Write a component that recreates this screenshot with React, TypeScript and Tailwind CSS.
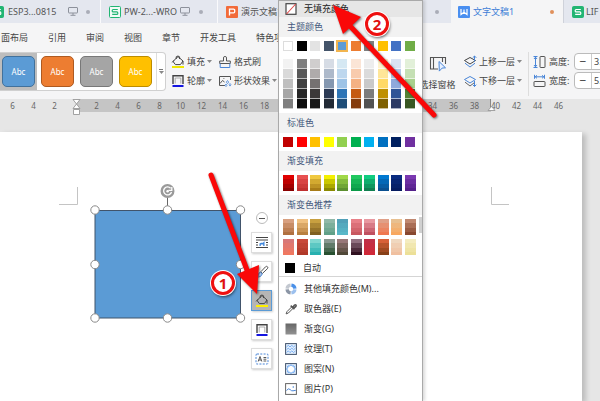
import React from 'react';

const themeColors = [
  { base: '#ffffff', shades: ['#f2f2f2', '#d9d9d9', '#bfbfbf', '#a6a6a6', '#7f7f7f'] },
  { base: '#000000', shades: ['#7f7f7f', '#595959', '#3f3f3f', '#262626', '#0d0d0d'] },
  { base: '#e3e3e3', shades: ['#d0cece', '#afabab', '#757171', '#3b3838', '#171717'] },
  { base: '#44546a', shades: ['#d6dce5', '#adb9ca', '#8497b0', '#2b3a55', '#222a35'] },
  { base: '#5b9bd5', shades: ['#d5e8f3', '#bdd7ee', '#9dc3e6', '#2e75b6', '#1f4e79'] },
  { base: '#ed7d31', shades: ['#fbe5d6', '#f8cbad', '#f4b183', '#c55a11', '#843c0c'] },
  { base: '#7f7f7f', shades: ['#ededed', '#dbdbdb', '#c9c9c9', '#7c7c7c', '#525252'] },
  { base: '#ffc000', shades: ['#fff2cc', '#ffe699', '#ffd966', '#bf9000', '#7f6000'] },
  { base: '#4472c4', shades: ['#dae3f3', '#b4c7e7', '#8faadc', '#2f5597', '#2c3a64'] },
  { base: '#70ad47', shades: ['#e2f0d9', '#c5e0b4', '#a9d18e', '#548235', '#385723'] },
];

const standardColors = [
  '#c00000', '#ff0000', '#ffc000', '#ffff00', '#92d050',
  '#00b050', '#00b0f0', '#0070c0', '#002060', '#7030a0',
];

const gradientFills = [
  ['#e00000', '#8a0000'], ['#e85050', '#c03030'], ['#f0c840', '#a87c18'], ['#f4f000', '#8c8a00'],
  ['#a0d848', '#5c9030'], ['#20c860', '#0a9a48'], ['#10cc80', '#108050'], ['#0078d0', '#0a5090'],
  ['#0a2c80', '#061c60'], ['#7a38b0', '#54208a'],
];

const suggestedRows = [
  [
    ['#d8a080', '#b07040'], ['#f0c080', '#b88040'], ['#c8a040', '#806020'], ['#90b8a8', '#60a088'],
    ['#50a0b8', '#58b8c8'], ['#e88088', '#c85860'], ['#e898a0', '#c05060'], ['#e0a088', '#f07850'],
    ['#e8c090', '#f8a860'], ['#c08870', '#884830'],
  ],
  [
    ['#d87878', '#f07860'], ['#c84838', '#b03828'], ['#80d8d0', '#28b0b0'], ['#889890', '#285030'],
    ['#987878', '#504838'], ['#907080', '#301020'], ['#c03048', '#d02838'], ['#d86038', '#884018'],
    ['#f0d8c0', '#f0c0a0'], ['#f4ecc0', '#ece098'],
  ],
];

const presets = [
  { name: 'blue', style: 'bg-[#5b9bd5] border-[#41719c]', selected: true },
  { name: 'orange', style: 'bg-[#ed7d31] border-[#ae5a21]', selected: false },
  { name: 'gray', style: 'bg-[#a5a5a5] border-[#787878]', selected: false },
  { name: 'yellow', style: 'bg-[#ffc000] border-[#bc8c00]', selected: false },
];

const ribbonTabs = ['面布局', '引用', '审阅', '视图', '章节', '开发工具', '特色项'];

const Caret = () => (
  <svg viewBox="0 0 5 3" className="h-[3px] w-[5px] shrink-0">
    <path d="M0 0h5L2.5 3z" fill="#888" />
  </svg>
);

const Monitor = () => (
  <svg viewBox="0 0 10 9" className="h-[9px] w-[10px] shrink-0" fill="none" stroke="#8d919b">
    <rect x="0.5" y="0.5" width="9" height="5.5" rx="0.5" />
    <path d="M5 6v2M2.5 8.3h5" />
  </svg>
);

const SheetLogo = ({ outlined = false }: { outlined?: boolean }) => (
  <svg viewBox="0 0 12 12" className="size-3 shrink-0" fill="none">
    <rect x="0.5" y="0.5" width="11" height="11" rx="1" fill={outlined ? '#f3fbf7' : '#22b573'} stroke="#22b573" />
    <path d="M8.8 3.5H4.2a1 1 0 0 0-1 1v.4a1 1 0 0 0 1 1h3.6a1 1 0 0 1 1 1v.5a1 1 0 0 1-1 1H3.2" stroke={outlined ? '#22b573' : '#fff'} strokeWidth="1.2" />
  </svg>
);

const SlideLogo = () => (
  <svg viewBox="0 0 12 12" className="size-3 shrink-0" fill="none">
    <rect width="12" height="12" rx="1" fill="#f26b3a" />
    <path d="M3.5 9.5V3.2h4.2a1 1 0 0 1 1 1v1.6a1 1 0 0 1-1 1H3.5" stroke="#fff" strokeWidth="1.3" />
  </svg>
);

const WriterLogo = () => (
  <svg viewBox="0 0 12 12" className="size-3 shrink-0" fill="none">
    <rect width="12" height="12" rx="1" fill="#4a8ff0" />
    <path d="M3 3v5.5l3-2.3 3 2.3V3M6 3.5v3" stroke="#fff" strokeWidth="1.2" />
  </svg>
);

const BucketIcon = ({ yellow = '#f0e800' }: { yellow?: string }) => (
  <svg viewBox="0 0 14 14" className="size-3.5 shrink-0" fill="none" stroke="#444" strokeWidth="1">
    <path d="M7 1.6 12 6 9.4 9.6H4.4L2 6.4z" />
    <path d="M5.2 4V1.8q1.8-1.6 3.4 0V4M12 6v3.6M1.2 7.4 3 5.4" />
    <rect x="1" y="11" width="12" height="2" fill={yellow} stroke="none" />
  </svg>
);

const OutlineIcon = () => (
  <svg viewBox="0 0 14 14" className="size-3.5 shrink-0" fill="none">
    <path d="M2 10V1.7h10V10" stroke="#444" strokeWidth="1.4" />
    <path d="M4.2 9.5V4h5.6v5.5" stroke="#999" strokeWidth="0.8" />
    <rect x="1.5" y="11" width="11" height="2" fill="#1414e0" />
  </svg>
);

const FormatBrushIcon = () => (
  <svg viewBox="0 0 14 14" className="size-3.5 shrink-0" fill="none" strokeWidth="1">
    <path d="M5.5 6V2.2q1.5-1.6 3 0V6" stroke="#555" />
    <path d="M5.5 6H1.7v2.5h10.6V6H8.5" stroke="#555" />
    <path d="M2.2 8.5v4h9.6v-4" stroke="#4a86d8" />
  </svg>
);

const ShapeEffectIcon = () => (
  <svg viewBox="0 0 14 14" className="size-3.5 shrink-0" fill="none">
    <path d="M7 11.5H1.5v-9h11V6" stroke="#555" />
    <path d="m2 9.5 2.5-3 2 1.5" stroke="#555" />
    <path d="M5.5 4.5h.8" stroke="#555" />
    <path d="m9.5 6.5 1.2 1.6L9.5 9.7 8.3 8.1zM8 10l1 1.3L8 12.6l-1-1.3zM12 9.5l1 1.3-1 1.3-1-1.3z" stroke="#4a86d8" strokeWidth="0.8" />
  </svg>
);

const SelectPaneIcon = () => (
  <svg viewBox="0 0 18 17" className="h-[17px] w-[18px]" fill="none">
    <path d="M9 13H1.5V1.5h15V8M4.5 1.5V13M13.5 1.5V6" stroke="#555" strokeWidth="1.1" />
    <path d="m10 5.5 6.5 6.3-3.4.3-2.8 3z" fill="#e6f0ff" stroke="#4a86d8" />
  </svg>
);

const LayerIcon = ({ down = false }: { down?: boolean }) => (
  <svg viewBox="0 0 14 14" className="size-3.5 shrink-0" fill="none">
    <path d="m7 2.5 5.5 3L7 9 1.5 5.5z" stroke={down ? '#4a86d8' : '#444'} />
    <path d="M2 8.2 7 12l5-3.8" stroke={down ? '#666' : '#4a86d8'} />
    {down ? (
      <path d="M11.5 7v5.5m-1.8-1.8 1.8 1.8 1.8-1.8" stroke="#4a86d8" />
    ) : (
      <path d="M11.5 6.5V1M9.7 2.8 11.5 1l1.8 1.8" stroke="#4a86d8" />
    )}
  </svg>
);

const HeightIcon = () => (
  <svg viewBox="0 0 13 14" className="h-3.5 w-[13px] shrink-0" fill="none">
    <path d="M.5 1.5h4M.5 12.5h4M2.5 2v10M1 4l1.5-1.8L4 4M1 10l1.5 1.8L4 10" stroke="#4a86d8" />
    <rect x="7" y="1.5" width="5" height="11" rx="0.5" stroke="#555" />
  </svg>
);

const WidthIcon = () => (
  <svg viewBox="0 0 13 14" className="h-3.5 w-[13px] shrink-0" fill="none">
    <path d="M1.5.8v4M11.5.8v4M2 2.8h9M4 1.3 2.2 2.8 4 4.3M9 1.3l1.8 1.5L9 4.3" stroke="#4a86d8" />
    <rect x="1" y="7.5" width="11" height="5" rx="0.5" stroke="#555" />
  </svg>
);

const WrapIcon = () => (
  <svg viewBox="0 0 14 14" className="size-3.5" fill="none">
    <path d="M1 1.5h12M1 4h12M1 6.5h2M11 6.5h2M1 9h2M11 9h2M1 11.5h12" stroke="#444" />
    <path d="M4.5 10V7.5L6 6.8h2L9.5 5v5H8.2V8.5H5.8V10z" fill="#3f86dc" />
  </svg>
);

const PenIcon = () => (
  <svg viewBox="0 0 14 14" className="size-3.5" fill="none">
    <path d="M12.5 1.8q-1-1-2 0L5.8 6.8l1.6 1.7 5-4.8q.9-1 .1-1.9z" stroke="#555" />
    <path d="M5.6 7.2q-2 .4-2.2 2.3-.3 1.8-2 2.3 4.4 1 5.8-2.8z" fill="#bcd6f8" stroke="#4a86d8" />
  </svg>
);

const TextFrameIcon = () => (
  <svg viewBox="0 0 14 14" className="size-3.5" fill="none">
    <rect x="1" y="2" width="12" height="10" rx="1" stroke="#4a86d8" strokeDasharray="2 1.3" />
    <path d="M3.2 9.5 5 4.5l1.8 5M3.8 8h2.4M8.5 5.5h2.8M8.5 7.2h2.8M8.5 9h2.8" stroke="#444" strokeWidth="0.9" />
  </svg>
);

const NoFillIcon = () => (
  <svg viewBox="0 0 12 12" className="size-3 shrink-0" fill="none">
    <rect x="1" y="0.7" width="10" height="10.6" fill="#fff" stroke="#444" strokeWidth="1.2" />
    <path d="M1.5 11 10.7 1" stroke="#e04848" strokeWidth="1.1" />
  </svg>
);

const WheelIcon = () => (
  <svg viewBox="0 0 12 12" className="size-3 shrink-0" fill="none" strokeWidth="3.4">
    <path d="M6.4 2.1A4 4 0 0 1 9.9 5.6" stroke="#4a90e8" />
    <path d="M9.9 6.4a4 4 0 0 1-3.5 3.5" stroke="#9cc0ee" />
    <path d="M5.6 9.9a4 4 0 0 1-3.5-3.5" stroke="#8b95a5" />
    <path d="M2.1 5.6a4 4 0 0 1 3.5-3.5" stroke="#c3c8d0" />
  </svg>
);

const DropperIcon = () => (
  <svg viewBox="0 0 12 12" className="size-3 shrink-0" fill="none">
    <path d="M7 3.6 2 8.6l-.9 2.3 2.3-.9 5-5" stroke="#555" />
    <path d="m5.7 2.6 3.7 3.7M7.5 4.5l2-2.4q.9-.6 1.4 0t0 1.3L8.6 5.4z" stroke="#555" strokeWidth="1.5" />
  </svg>
);

const GradientIcon = () => (
  <svg viewBox="0 0 12 12" className="size-3 shrink-0">
    <defs>
      <linearGradient id="grayFade" x1="0" y1="0" x2="0" y2="1">
        <stop offset="0" stopColor="#666" />
        <stop offset="1" stopColor="#929292" />
      </linearGradient>
    </defs>
    <rect x="0.5" y="0.5" width="11" height="11" fill="url(#grayFade)" />
  </svg>
);

const TextureIcon = () => (
  <svg viewBox="0 0 12 12" className="size-3 shrink-0" fill="none">
    <rect x="0.6" y="0.6" width="10.8" height="10.8" fill="#e3effd" stroke="#41516b" />
    <path d="m1.5 4 1.8-1.7L5 4l1.8-1.7L8.6 4l1.8-1.7M1.5 6.8l1.8-1.7L5 6.8l1.8-1.7 1.8 1.7 1.8-1.7M1.5 9.6l1.8-1.7L5 9.6l1.8-1.7 1.8 1.7 1.8-1.7" stroke="#5b9cee" strokeWidth="0.8" />
  </svg>
);

const PatternIcon = () => (
  <svg viewBox="0 0 12 12" className="size-3 shrink-0" fill="none">
    <rect x="0.6" y="0.6" width="10.8" height="10.8" fill="#e3effd" stroke="#41516b" />
    <path d="m6 1.8 1.4 1.1 1.8.1.1 1.7L10.4 6 9.3 7.4l-.1 1.8-1.8.1L6 10.4 4.6 9.3l-1.8-.1-.1-1.8L1.6 6l1.1-1.3.1-1.7 1.8-.1z" fill="#fff" stroke="#5b9cee" />
  </svg>
);

const PictureIcon = () => (
  <svg viewBox="0 0 12 12" className="size-3 shrink-0" fill="none">
    <rect x="0.6" y="0.6" width="10.8" height="10.8" fill="#fff" stroke="#666" />
    <path d="M1.5 7.5q2-2.8 3.6-1T8 7.8l2.8-.5" stroke="#4a86d8" />
    <circle cx="8.3" cy="4" r="0.8" fill="#4a86d8" />
  </svg>
);

const menuActions = [
  { label: '其他填充颜色(M)...', icon: <WheelIcon /> },
  { label: '取色器(E)', icon: <DropperIcon /> },
  { label: '渐变(G)', icon: <GradientIcon /> },
  { label: '纹理(T)', icon: <TextureIcon /> },
  { label: '图案(N)', icon: <PatternIcon /> },
  { label: '图片(P)', icon: <PictureIcon /> },
];

const SectionTitle = ({ children }: { children: React.ReactNode }) => (
  <h3 className="flex h-5 items-center bg-[#f2f2f2] pl-2 text-[#44597c]">{children}</h3>
);

const GradientRow = ({ colors }: { colors: string[][] }) => (
  <div className="grid grid-cols-10 px-1">
    {colors.map(([from, to]) => (
      <button
        key={from + to}
        aria-label={from}
        className="h-4 w-[11px]"
        style={{
          background: `linear-gradient(${from} 25%, color-mix(in srgb, ${from} 60%, ${to}) 25% 55%, color-mix(in srgb, ${from} 30%, ${to}) 55% 80%, ${to} 80%)`,
        }}
      />
    ))}
  </div>
);

const FillMenu = () => (
  <div className="absolute top-0 left-[278px] z-10 h-full w-[145px] overflow-hidden border-x border-t border-[#a9a9a9] bg-white shadow-[2px_0_3px_rgba(0,0,0,0.15)]">
    <button className="flex h-4 w-full items-center gap-[7px] bg-[#e6e6e6] pl-[6px] text-[#222]">
      <NoFillIcon />
      无填充颜色
    </button>
    <SectionTitle>主题颜色</SectionTitle>
    <div className="grid grid-cols-10 px-1 pt-1">
      {themeColors.map(({ base, shades }, i) => (
        <div key={base} className="flex flex-col items-start gap-2">
          <button
            aria-label={base}
            className={`size-2.5 ${i === 0 ? 'border border-[#ddd]' : ''} ${i === 4 ? 'ring-1 ring-[#f2b550] ring-inset outline-1 outline-[#f2b550]' : ''}`}
            style={{ backgroundColor: base }}
          />
          <div className="flex flex-col">
            {shades.map((shade, row) => (
              <button key={row} aria-label={shade} className="h-2.5 w-2.5 border-b border-white/60" style={{ backgroundColor: shade }} />
            ))}
          </div>
        </div>
      ))}
    </div>
    <div className="mt-1">
      <SectionTitle>标准色</SectionTitle>
      <div className="grid grid-cols-10 px-1 py-1">
        {standardColors.map((color) => (
          <button key={color} aria-label={color} className="size-2.5" style={{ backgroundColor: color }} />
        ))}
      </div>
    </div>
    <SectionTitle>渐变填充</SectionTitle>
    <div className="py-1">
      <GradientRow colors={gradientFills} />
    </div>
    <SectionTitle>渐变色推荐</SectionTitle>
    <div className="relative flex flex-col gap-1 py-1">
      {suggestedRows.map((row, i) => (
        <GradientRow key={i} colors={row} />
      ))}
      <div className="absolute top-0.5 right-0 h-4 w-[3px] bg-[#d0d0d0]" />
    </div>
    <button className="flex h-[18px] w-full items-center gap-2 border-b border-[#d5d5d5] pl-1.5 text-[#333]">
      <span className="size-2.5 bg-black" />
      自动
    </button>
    <div className="pt-0.5">
      {menuActions.map(({ label, icon }) => (
        <button key={label} className="flex h-5 w-full items-center gap-[7px] pl-1.5 text-[#333]">
          {icon}
          {label}
        </button>
      ))}
    </div>
  </div>
);

const DocumentTabs = () => (
  <nav className="flex h-[23px] shrink-0 bg-[#dfe2ea] text-[#555]">
    <button className="flex w-[101px] shrink-0 items-center border-r border-white/80 bg-[#e4e7ef]">
      <span className="-ml-2 flex items-center gap-1">
        <SheetLogo />
        ESP3...0815
      </span>
      <span className="ml-auto flex items-center gap-2 pr-2.5">
        <Monitor />
        <span className="size-1 rounded-full bg-[#aaadb8]" />
      </span>
    </button>
    <button className="flex w-[117px] shrink-0 items-center gap-[3px] border-r border-white/80 bg-[#e4e7ef] pl-2">
      <SheetLogo outlined />
      PW-2...-WRO
      <Monitor />
      <span className="ml-1.5 size-1 rounded-full bg-[#aaadb8]" />
    </button>
    <button className="flex min-w-0 flex-1 items-center gap-[3px] bg-[#e4e7ef] pl-2">
      <SlideLogo />
      演示文稿1
      <span className="mr-3 ml-auto size-1 rounded-full bg-[#aaadb8]" />
    </button>
    <button className="flex w-[112px] shrink-0 items-center gap-[3px] bg-[#f5f5f6] px-[7px] text-[#417ed6]">
      <WriterLogo />
      文字文稿1
      <span className="mr-0.5 ml-auto size-1 rounded-full bg-[#e0905c]" />
    </button>
    <button className="flex w-[37px] shrink-0 items-center gap-0.5 border-l border-[#cfd2da] bg-[#e4e7ef] pl-2">
      <SheetLogo />
      LIF
    </button>
  </nav>
);

const RibbonButton = ({ icon, label, caret = true }: { icon: React.ReactNode; label: string; caret?: boolean }) => (
  <button className="flex h-[19px] items-center gap-0.5 whitespace-nowrap">
    {icon}
    {label}
    {caret && <Caret />}
  </button>
);

const SizeField = ({ id, label, icon, value }: { id: string; label: string; icon: React.ReactNode; value: string }) => (
  <div className="flex h-[19px] items-center">
    {icon}
    <label htmlFor={id} className="w-7 shrink-0 pl-[3px] whitespace-nowrap">{label}</label>
    <div className="flex h-[17px] shrink-0 rounded-l border border-[#bbb] bg-white">
      <button className="w-[17px] border-r border-[#ccc] text-xs leading-3" aria-label={`${label} -`}>−</button>
      <input id={id} defaultValue={value} className="w-10 pl-0.5 outline-none" />
    </div>
  </div>
);

const Ribbon = () => (
  <header className="shrink-0 overflow-hidden bg-[#f5f5f6] text-[#444]">
    <div className="flex h-[29px] items-center gap-5 pl-px">
      {ribbonTabs.map((tab) => (
        <button key={tab} className="shrink-0">{tab}</button>
      ))}
    </div>
    <div className="flex h-[47px] items-start">
      <div className="flex h-[39px] shrink-0 items-center rounded-r border border-l-0 border-[#d0d0d0] bg-white">
        {presets.map(({ name, style, selected }) => (
          <div key={name} className={`flex h-full w-[39px] items-center pl-0.5 ${selected ? 'border-r-2 border-white bg-[#bdbdbd]' : ''}`}>
            <button className={`h-[31px] w-[33px] shrink-0 rounded-[5px] border text-[8px] text-white ${style}`}>Abc</button>
          </div>
        ))}
        <button aria-label="more" className="flex h-full w-[9px] flex-col items-center justify-center gap-px border-l border-[#ddd]">
          <span className="h-px w-1 bg-[#777]" />
          <Caret />
        </button>
      </div>
      <div className="flex shrink-0 gap-1.5 pl-[5px]">
        <div>
          <RibbonButton icon={<BucketIcon />} label="填充" />
          <RibbonButton icon={<OutlineIcon />} label="轮廓" />
        </div>
        <div>
          <RibbonButton icon={<FormatBrushIcon />} label="格式刷" caret={false} />
          <RibbonButton icon={<ShapeEffectIcon />} label="形状效果" />
        </div>
      </div>
      <div className="ml-auto flex w-[181px] shrink-0 overflow-hidden">
        <button className="flex h-[39px] w-[37px] shrink-0 flex-col items-center justify-between pt-1 whitespace-nowrap">
          <SelectPaneIcon />
          选择窗格
        </button>
        <div className="ml-[7px] shrink-0">
          <RibbonButton icon={<LayerIcon />} label="上移一层" />
          <RibbonButton icon={<LayerIcon down />} label="下移一层" />
        </div>
        <div className="mr-1 ml-1.5 h-11 w-px shrink-0 bg-[#ddd]" />
        <div>
          <SizeField id="shape-height" label="高度:" icon={<HeightIcon />} value="3.97" />
          <SizeField id="shape-width" label="宽度:" icon={<WidthIcon />} value="5.37" />
        </div>
      </div>
    </div>
  </header>
);

const Tick = ({ value }: { value: number }) => <span className="w-[21px] shrink-0 text-center">{value}</span>;

const Ruler = () => (
  <div className="flex h-[13px] shrink-0 overflow-hidden bg-[#e6e6e6] text-[8px] leading-[13px] text-[#666]">
    <div className="flex w-[76px] shrink-0 pl-0.5">
      {[6, 4, 2].map((n) => <Tick key={n} value={n} />)}
    </div>
    <div className="flex w-[415px] shrink-0 bg-[#c5c5c5] pl-2.5">
      {Array.from({ length: 19 }, (_, i) => <Tick key={i} value={(i + 1) * 2} />)}
    </div>
    <div className="-ml-1.5 flex">
      {[40, 42, 44, 46].map((n) => <Tick key={n} value={n} />)}
    </div>
  </div>
);

const floatingTools = [
  { label: 'wrap', icon: <WrapIcon />, active: false },
  { label: 'style', icon: <PenIcon />, active: false },
  { label: 'fill', icon: <BucketIcon yellow="#fff000" />, active: true },
  { label: 'outline', icon: <OutlineIcon />, active: false },
  { label: 'text', icon: <TextFrameIcon />, active: false },
];

const handles = [
  [95, 210], [167.5, 210], [240.5, 210],
  [95, 264.5], [240.5, 264.5],
  [95, 318], [167.5, 318], [240.5, 318],
];

const Drawing = () => (
  <svg viewBox="0 0 600 401" className="pointer-events-none absolute top-0 left-0 h-[401px] w-[600px]" fill="none">
    {/* margin corners */}
    <path d="M77.5 187v17.5H59M491.5 187v17.5H509" stroke="#c4c4c4" />
    {/* indent markers */}
    <path d="M73 99.5h7L76.5 104zM73 108.5h7L76.5 104zM73.5 109.5h6v5h-6z" fill="#fff" stroke="#999" strokeWidth="0.9" />
    <path d="M488 110.5h7l-3.5-4z" fill="#fff" stroke="#999" strokeWidth="0.9" />
    <path d="M490.5 99v8" stroke="#888" />
    <path d="M167.5 197v10" stroke="#666" />
    <circle cx="167.5" cy="191" r="7" fill="#9a9a9a" />
    <path d="M170.6 188.2a4 4 0 1 0 .9 3.8M171.8 187v3.4h-3.4" stroke="#fff" strokeWidth="1.3" />
    <circle cx="167.6" cy="191.3" r="1.2" fill="#fff" />
    <rect x="95" y="210.5" width="145.5" height="107.5" fill="#5b9bd5" stroke="#41546b" />
    {handles.map(([x, y]) => (
      <circle key={`${x}-${y}`} cx={x} cy={y} r="4.2" fill="#fff" stroke="#8a8a8a" />
    ))}
  </svg>
);

const Arrows = () => (
  <svg viewBox="0 0 600 401" className="pointer-events-none absolute top-0 left-0 z-20 h-[401px] w-[600px] drop-shadow-[1px_1px_1px_rgba(0,0,0,0.55)]">
    <g stroke="#fa0808" strokeWidth="5" strokeLinecap="round" fill="#fa0808">
      <path d="M211 175 247 270" />
      <path d="M434 115 350 26" />
      <path d="M237 274 259 265 257 294z" stroke="none" />
      <path d="M333 5 361 17 343 34z" stroke="none" />
    </g>
  </svg>
);

const badge = 'absolute z-20 flex size-6 items-center justify-center rounded-full border-[3px] border-[#ee1010] bg-white text-[15px] font-bold text-[#e01010] shadow-[0_0_0_1px_white,1px_2px_3px_rgba(0,0,0,0.6)]';

export default function App() {
  return (
    <div className="relative flex h-screen flex-col overflow-hidden bg-[#e6e6e6] font-['Noto_Sans','Noto_Sans_CJK_SC',sans-serif] text-[9px] leading-3">
      <DocumentTabs />
      <Ribbon />
      <Ruler />
      <main className="flex flex-1 pt-5 pr-[18px]">
        <div className="flex-1 bg-white shadow-[4px_2px_5px_rgba(0,0,0,0.18)]" />
      </main>
      <Drawing />
      <div className="absolute top-[212px] left-[251px] flex flex-col items-center gap-2">
        <button aria-label="collapse" className="flex size-3 items-center justify-center rounded-full border border-[#bbb] bg-white">
          <span className="h-px w-1.5 bg-[#555]" />
        </button>
        {floatingTools.map(({ label, icon, active }) => (
          <button
            key={label}
            aria-label={label}
            className={`flex size-[21px] items-center justify-center border shadow-[1px_1px_2px_rgba(0,0,0,0.2)] ${active ? 'border-[#5b9bd5] bg-[#b5b5b5]' : 'border-[#ddd] bg-white'}`}
          >
            {icon}
          </button>
        ))}
      </div>
      <FillMenu />
      <Arrows />
      <span className={`${badge} top-[271px] left-[211px]`}>1</span>
      <span className={`${badge} top-[12px] left-[365px]`}>2</span>
    </div>
  );
}
